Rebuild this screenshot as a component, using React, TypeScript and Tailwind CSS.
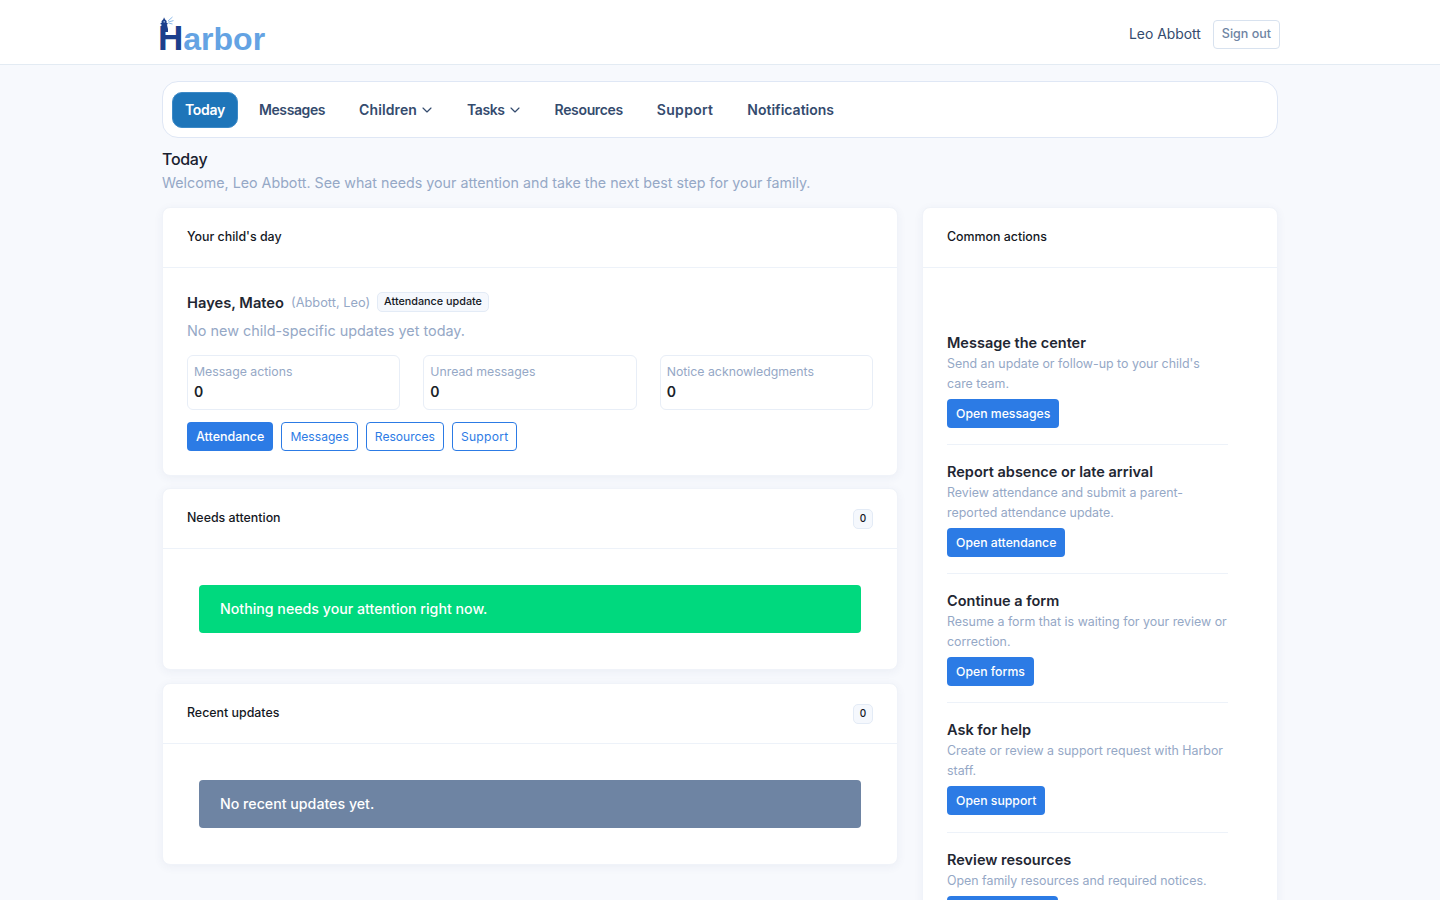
import { ChevronDown } from "lucide-react";

const F = "font-['Inter','Noto_Sans',sans-serif]";

function Logo() {
  return (
    <div className="relative h-[64px] w-[120px] shrink-0">
      <svg className="absolute left-0 top-[16px]" width="16" height="16" viewBox="0 0 16 16">
        <path d="M3.6 3 L1.6 5 V7.2 H6.6 V5 L4.6 3 Z" fill="#1c3f8c" />
        <rect x="3.6" y="1.8" width="1" height="2" fill="#1c3f8c" />
        <rect x="0.6" y="7" width="7" height="1.3" fill="#1c3f8c" />
        <path d="M1.5 8 H6.8 L8 13 V16 H1 Z" fill="#1c3f8c" />
        <rect x="3.6" y="5" width="1.2" height="1.6" fill="#9db8e0" />
        <rect x="3.6" y="10" width="1" height="1.4" fill="#7f9fd4" />
        <path d="M8 5 L12.5 1 M8.4 6 L13.5 4.6 M8.4 7 L12.5 8" stroke="#8fbcea" strokeWidth="1" fill="none" />
      </svg>
      <div className="absolute left-[-2px] top-[18px] whitespace-nowrap font-['Liberation_Sans',sans-serif] text-[32px] leading-[40px] font-bold">
        <span className="text-[35px] text-[#1c3f8c]">H</span>
        <span className="text-[#64a3e3]">arbor</span>
      </div>
    </div>
  );
}

function NavItem({ label, caret, active, track }: { label: string; caret?: boolean; active?: boolean; track?: string }) {
  return (
    <div
      className={
        active
          ? `flex h-[36px] items-center rounded-[10px] border border-[#3d8ac7] bg-[#1e75b9] px-[12px] text-[14px] font-semibold text-white ${track ?? ""}`
          : "flex h-[36px] items-center px-[13px] text-[14px] font-semibold text-[#344b6e]"
      }
    >
      <span className={track}>{label}</span>
      {caret && <ChevronDown className="mr-[-2px] ml-[2px] text-[#344b6e]" size={16} strokeWidth={1.75} />}
    </div>
  );
}

function Card({ title, count, children, extra }: { title: string; count?: number; children: React.ReactNode; extra?: string }) {
  return (
    <section className={`overflow-hidden rounded-[8px] border border-[#f0f3f9] bg-white shadow-[0_2px_10px_rgba(43,69,112,0.06)] ${extra ?? ""}`}>
      <header className="flex h-[60px] items-center justify-between border-b border-[#edf2f9] px-[24px]">
        <h2 className="text-[12.4px] font-medium text-[#14181f]">{title}</h2>
        {count !== undefined && (
          <span className="flex h-[20px] w-[20px] items-center justify-center rounded-[5px] border border-[#e3ebf6] bg-[#f5f8fd] text-[10px] font-medium text-[#14181f]">
            {count}
          </span>
        )}
      </header>
      {children}
    </section>
  );
}

function Stat({ label }: { label: string }) {
  return (
    <div className="h-[55px] flex-1 rounded-[6px] border border-[#e8eef7] px-[6px] pt-[7px]">
      <div className="text-[12.3px] leading-[17px] text-[#95a8c6]">{label}</div>
      <div className="mt-[2px] text-[14px] leading-[20px] font-semibold text-[#1a1f29]">0</div>
    </div>
  );
}

function Outline({ label, track }: { label: string; track?: string }) {
  return (
    <div className={`flex h-[29px] items-center rounded-[4px] border border-[#2c7be5] px-[8px] pt-[1px] text-[12.1px] text-[#2c7be5] ${track ?? ""}`}>
      {label}
    </div>
  );
}

function Action({ title, desc, btn, last }: { title: string; desc: string; btn: string; last?: boolean }) {
  return (
    <div className={last ? "pt-[18px]" : "h-[129.2px] border-b border-[#edf2f9] pt-[18px] first:h-[111px] first:pt-0"}>
      <h3 className="text-[14.5px] leading-[18px] font-semibold text-[#1f2733]">{title}</h3>
      <p className="mt-[2px] text-[12.4px] leading-[19.5px] text-[#95a8c6]">{desc}</p>
      <div className="mt-[6px] inline-flex h-[29px] items-center rounded-[4px] bg-[#2c7be5] px-[9px] pt-[1px] text-[12.25px] font-medium text-white">
        {btn}
      </div>
    </div>
  );
}

export default function App() {
  return (
    <div className={`${F} min-h-[900px] bg-[#f7f9fd] pb-[32px] antialiased`}>
      <header className="h-[65px] border-b border-[#e3ebf3] bg-white">
        <div className="mx-auto flex h-[64px] w-[1120px] items-center justify-between">
          <Logo />
          <div className="mt-[4px] flex items-center gap-[12px]">
            <span className="text-[13.9px] text-[#344b6e]">Leo Abbott</span>
            <div className="flex h-[29px] items-center rounded-[4px] border border-[#d8e2ef] px-[8px] text-[12.5px] font-medium text-[#6e84a3]">
              Sign out
            </div>
          </div>
        </div>
      </header>

      <main className="mx-auto w-[1116px] pt-[16px]">
        <nav className="flex h-[57px] items-center gap-[8px] rounded-[16px] border border-[#dfe7f5] bg-white pl-[9px]">
          <NavItem label="Today" active track="tracking-[-0.3px]" />
          <NavItem label="Messages" track="tracking-[-0.4px]" />
          <NavItem label="Children" caret track="tracking-[0.1px]" />
          <NavItem label="Tasks" caret track="tracking-[-0.4px]" />
          <NavItem label="Resources" track="tracking-[-0.35px]" />
          <NavItem label="Support" track="tracking-[0.3px]" />
          <NavItem label="Notifications" />
        </nav>

        <h1 className="mt-[9px] text-[16px] leading-[24px] font-medium tracking-[-0.3px] text-[#1a2230]">Today</h1>
        <p className="mt-[1px] text-[14.26px] leading-[22px] text-[#95a8c6]">
          Welcome, Leo Abbott. See what needs your attention and take the next best step for your family.
        </p>

        <div className="mt-[13px] flex items-start gap-[24px]">
          <div className="flex w-[736px] flex-col gap-[12px]">
            <Card title="Your child's day">
              <div className="px-[24px] pt-[24px] pb-[24px]">
                <div className="flex h-[22px] items-center">
                  <span className="text-[14.7px] font-semibold text-[#1f2733]">Hayes, Mateo</span>
                  <span className="ml-[7px] text-[12.8px] text-[#95a8c6]">(Abbott, Leo)</span>
                  <span className="mb-[2px] ml-[7px] flex h-[20px] items-center rounded-[5px] border border-[#e3ebf6] bg-[#f5f8fd] px-[6px] text-[10.8px] font-medium text-[#14181f]">
                    Attendance update
                  </span>
                </div>
                <p className="mt-[6px] text-[14.4px] leading-[22px] text-[#95a8c6]">No new child-specific updates yet today.</p>
                <div className="mt-[13px] flex gap-[23px]">
                  <Stat label="Message actions" />
                  <Stat label="Unread messages" />
                  <Stat label="Notice acknowledgments" />
                </div>
                <div className="mt-[12px] flex gap-[8px]">
                  <div className="flex h-[29px] items-center rounded-[4px] bg-[#2c7be5] px-[9px] pt-[1px] text-[12.5px] font-medium text-white">Attendance</div>
                  <Outline label="Messages" />
                  <Outline label="Resources" />
                  <Outline label="Support" track="tracking-[0.25px]" />
                </div>
              </div>
            </Card>

            <Card title="Needs attention" count={0}>
              <div className="px-[36px] pt-[36px] pb-[36px]">
                <div className="flex h-[48px] items-center rounded-[4px] bg-[#00d97e] px-[21px] text-[14.2px] font-medium text-white">
                  Nothing needs your attention right now.
                </div>
              </div>
            </Card>

            <Card title="Recent updates" count={0} extra="mt-[1px]">
              <div className="px-[36px] pt-[36px] pb-[36px]">
                <div className="flex h-[48px] items-center rounded-[4px] bg-[#6e84a3] px-[21px] text-[14.2px] font-medium text-white">
                  No recent updates yet.
                </div>
              </div>
            </Card>
          </div>

          <div className="w-[356px]">
            <Card title="Common actions">
              <div className="pt-[66px] pr-[49px] pb-[24px] pl-[24px]">
                <Action title="Message the center" desc="Send an update or follow-up to your child's care team." btn="Open messages" />
                <Action title="Report absence or late arrival" desc="Review attendance and submit a parent-reported attendance update." btn="Open attendance" />
                <Action title="Continue a form" desc="Resume a form that is waiting for your review or correction." btn="Open forms" />
                <Action title="Ask for help" desc="Create or review a support request with Harbor staff." btn="Open support" />
                <Action title="Review resources" desc="Open family resources and required notices." btn="Open resources" last />
              </div>
            </Card>
          </div>
        </div>
      </main>
    </div>
  );
}
